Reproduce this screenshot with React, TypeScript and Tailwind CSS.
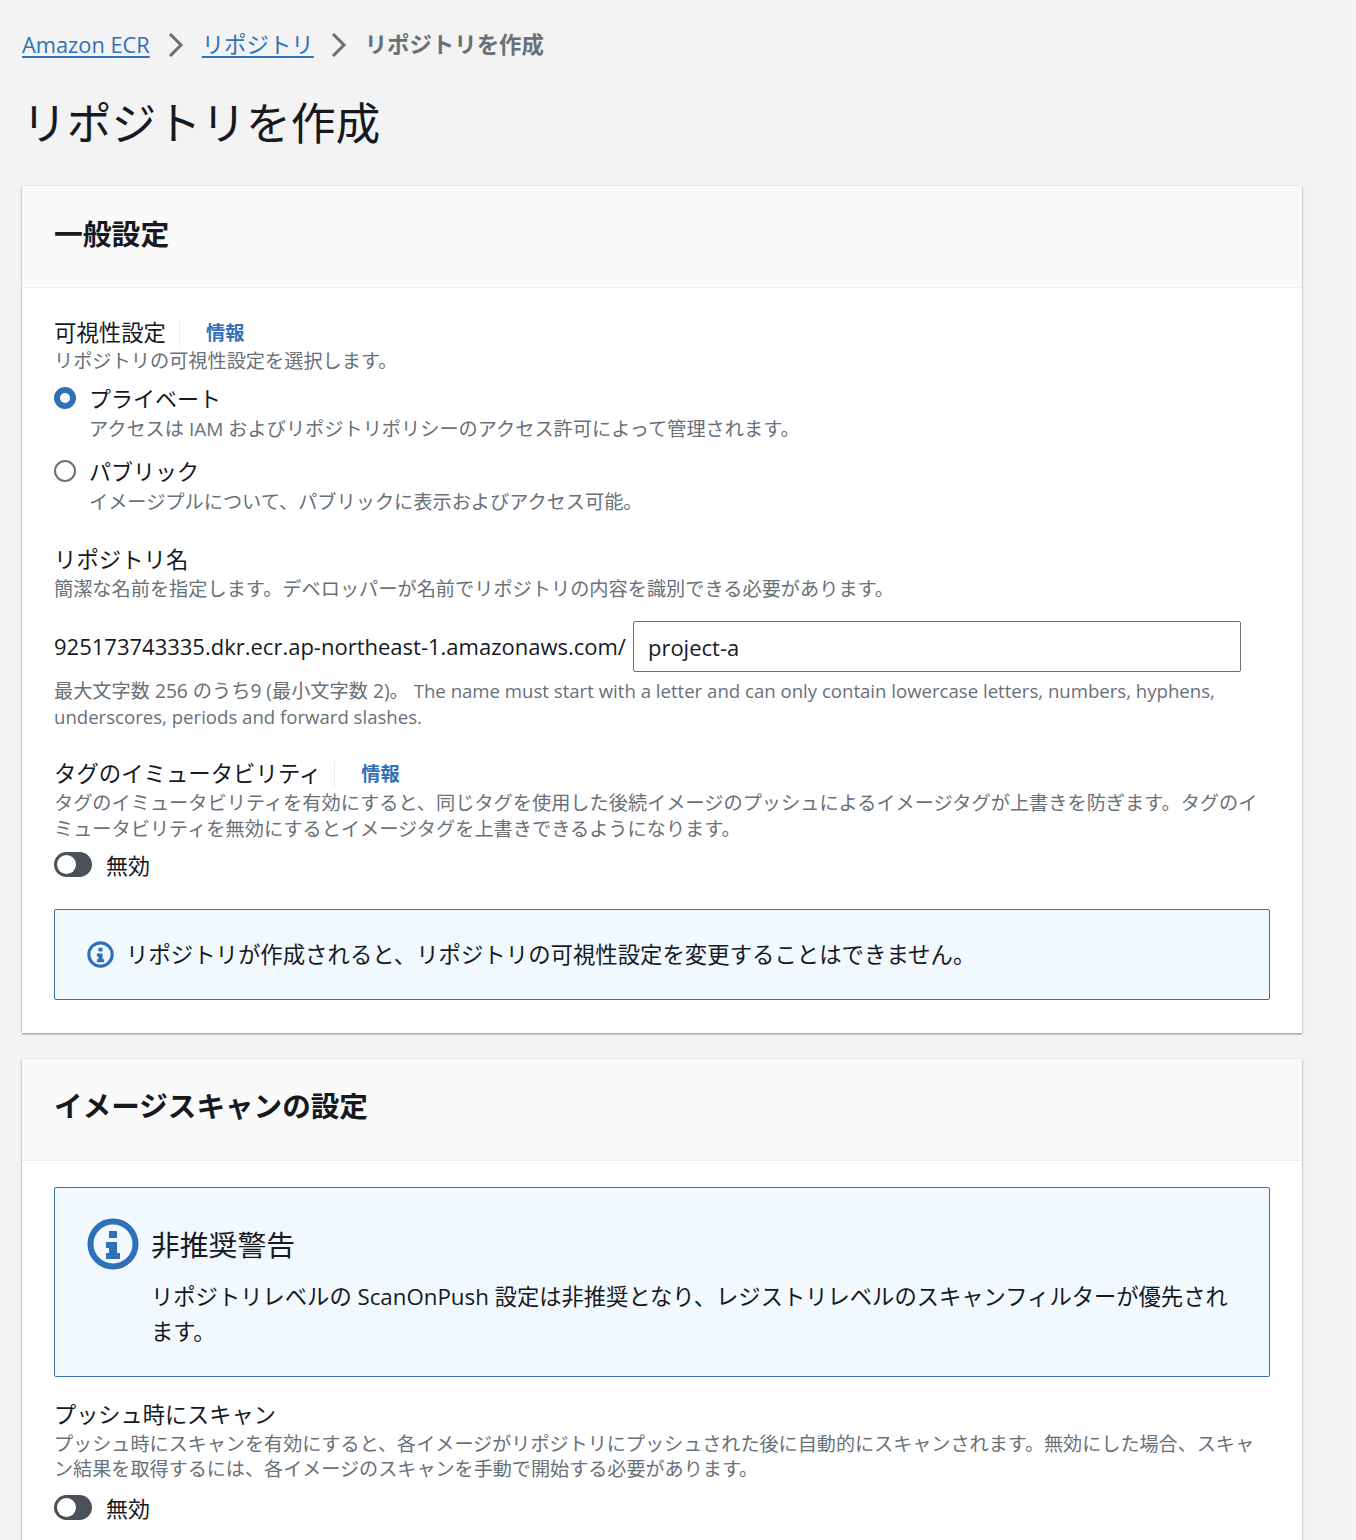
function InfoIcon({ size }: { size: number }) {
  return (
    <svg width={size} height={size} viewBox="0 0 52 52" className="shrink-0">
      <circle cx="26" cy="26" r="22.5" fill="none" stroke="#2f71b8" strokeWidth="6" />
      <rect x="22" y="13" width="8" height="7" fill="#2f71b8" />
      <path d="M19 24h11v11h3v6H19v-6h3v-5h-3z" fill="#2f71b8" />
    </svg>
  )
}

function Chevron({ className }: { className: string }) {
  return (
    <svg width="18" height="24" viewBox="0 0 18 24" className={className}>
      <path d="M2 1l11 11L2 23" fill="none" stroke="#687078" strokeWidth="3" />
    </svg>
  )
}

function Toggle() {
  return (
    <div className="flex items-center gap-[14px]">
      <div className="w-[38px] h-[25px] rounded-full bg-[#4b5159] flex items-center pl-[3px]">
        <div className="w-[19px] h-[19px] rounded-full bg-white" />
      </div>
      <span className="text-[22px] leading-[26px] pt-[2px] text-[#16191f]">無効</span>
    </div>
  )
}

function Radio({ checked, label, desc }: { checked: boolean; label: string; desc: React.ReactNode }) {
  return (
    <div className="flex gap-[13px]">
      <div className="pt-[2px]">
        {checked ? (
          <div className="w-[22px] h-[22px] rounded-full border-[6px] border-[#2f71b8] bg-white" />
        ) : (
          <div className="w-[22px] h-[22px] rounded-full border-2 border-[#687078] bg-white" />
        )}
      </div>
      <div>
        <div className="text-[22px] leading-[26px] text-[#16191f]">{label}</div>
        <div className="text-[19.2px] leading-[26px] mt-[5px] text-[#687078]">{desc}</div>
      </div>
    </div>
  )
}

export default function App() {
  return (
    <div
      className="h-[1540px] overflow-hidden bg-[#f3f3f3] pl-[22px] pr-[54px] pt-[30px]"
      style={{ fontFamily: '"Open Sans", "Noto Sans CJK JP", sans-serif' }}
    >
      <nav className="flex items-center text-[22.4px] leading-[30px] h-[30px]">
        <a className="text-[#2f71b8] underline underline-offset-[3px] decoration-[1.5px] text-[21.8px]">Amazon ECR</a>
        <Chevron className="ml-[18px] mr-[16px]" />
        <a className="text-[#2f71b8] underline underline-offset-[3px] decoration-[1.5px]">リポジトリ</a>
        <Chevron className="ml-[17px] mr-[16px]" />
        <span className="font-bold text-[#687078]">リポジトリを作成</span>
      </nav>

      <h1 className="text-[44.8px] leading-[56px] mt-[35px] text-[#16191f] font-normal">リポジトリを作成</h1>

      <section className="mt-[35px] bg-white shadow-[0_1px_2px_rgba(0,28,36,0.5)]">
        <div className="h-[102px] pb-[6px] bg-[#fafafa] border-b border-[#eaeded] flex items-center px-[32px]">
          <h2 className="text-[28.8px] font-bold text-[#16191f]">一般設定</h2>
        </div>
        <div className="px-[32px] pt-[29px] pb-[33px]">
          <div className="flex items-center h-[31px]">
            <span className="text-[22.4px] text-[#16191f]">可視性設定</span>
            <span className="w-px h-[26px] bg-[#eaeded] mx-[13px]" />
            <a className="text-[19.2px] font-bold text-[#2f71b8] ml-[13px] pt-[2px]">情報</a>
          </div>
          <p className="text-[19.2px] leading-[26px] text-[#687078]">リポジトリの可視性設定を選択します。</p>
          <div className="mt-[11px] flex flex-col gap-[16px]">
            <Radio
              checked
              label="プライベート"
              desc={<>アクセスは <span className="text-[19px]">IAM</span> およびリポジトリポリシーのアクセス許可によって管理されます。</>}
            />
            <Radio checked={false} label="パブリック" desc="イメージプルについて、パブリックに表示およびアクセス可能。" />
          </div>

          <div className="mt-[28px] text-[22.4px] leading-[33px] text-[#16191f]">リポジトリ名</div>
          <p className="text-[19.2px] leading-[26px] text-[#687078]">
            簡潔な名前を指定します。デベロッパーが名前でリポジトリの内容を識別できる必要があります。
          </p>
          <div className="mt-[19px] flex items-center gap-[7px]">
            <span className="text-[22px] text-[#16191f] whitespace-nowrap">925173743335.dkr.ecr.ap-northeast-1.amazonaws.com/</span>
            <input
              readOnly
              value="project-a"
              className="w-[608px] h-[51px] border border-[#687078] rounded-[2px] px-[14px] text-[22px] text-[#16191f] bg-white"
            />
          </div>
          <p className="mt-[6px] text-[19.2px] leading-[26px] text-[#687078]">
            最大文字数 256 のうち9 (最小文字数 2)。 <span className="text-[18.6px]">The name must start with a letter and can only contain lowercase letters, numbers, hyphens, underscores, periods and forward slashes.</span>
          </p>

          <div className="mt-[28px] flex items-center h-[32px]">
            <span className="text-[22.4px] text-[#16191f]">タグのイミュータビリティ</span>
            <span className="w-px h-[26px] bg-[#eaeded] mx-[13px]" />
            <a className="text-[19.2px] font-bold text-[#2f71b8] ml-[13px]">情報</a>
          </div>
          <p className="text-[19.2px] leading-[26px] text-[#687078]">
            タグのイミュータビリティを有効にすると、同じタグを使用した後続イメージのプッシュによるイメージタグが上書きを防ぎます。タグのイミュータビリティを無効にするとイメージタグを上書きできるようになります。
          </p>
          <div className="mt-[8px]">
            <Toggle />
          </div>

          <div className="mt-[31px] h-[91px] border border-[#3f6fa3] rounded-[2px] bg-[#f1f8fe] flex items-center gap-[12px] px-[32px]">
            <InfoIcon size={27} />
            <span className="text-[22.4px] text-[#16191f]">リポジトリが作成されると、リポジトリの可視性設定を変更することはできません。</span>
          </div>
        </div>
      </section>

      <section className="mt-[26px] bg-white shadow-[0_1px_2px_rgba(0,28,36,0.5)]">
        <div className="h-[102px] pb-[6px] bg-[#fafafa] border-b border-[#eaeded] flex items-center px-[32px]">
          <h2 className="text-[28.6px] font-bold text-[#16191f]">イメージスキャンの設定</h2>
        </div>
        <div className="px-[32px] pt-[26px] pb-[32px]">
          <div className="h-[190px] border border-[#3f6fa3] rounded-[2px] bg-[#f1f8fe] flex gap-[12px] pl-[32px] pr-[32px] pt-[30px]">
            <InfoIcon size={52} />
            <div>
              <div className="text-[28.8px] leading-[54px] text-[#16191f]">非推奨警告</div>
              <p className="text-[22.3px] leading-[35px] mt-[7px] text-[#16191f]">
                リポジトリレベルの ScanOnPush 設定は非推奨となり、レジストリレベルのスキャンフィルターが優先されます。
              </p>
            </div>
          </div>
          <div className="mt-[21px] text-[22.2px] leading-[33px] text-[#16191f]">プッシュ時にスキャン</div>
          <p className="mt-[1px] text-[19.1px] leading-[25px] text-[#687078]">
            プッシュ時にスキャンを有効にすると、各イメージがリポジトリにプッシュされた後に自動的にスキャンされます。無効にした場合、スキャン結果を取得するには、各イメージのスキャンを手動で開始する必要があります。
          </p>
          <div className="mt-[11px]">
            <Toggle />
          </div>
        </div>
      </section>
    </div>
  )
}
